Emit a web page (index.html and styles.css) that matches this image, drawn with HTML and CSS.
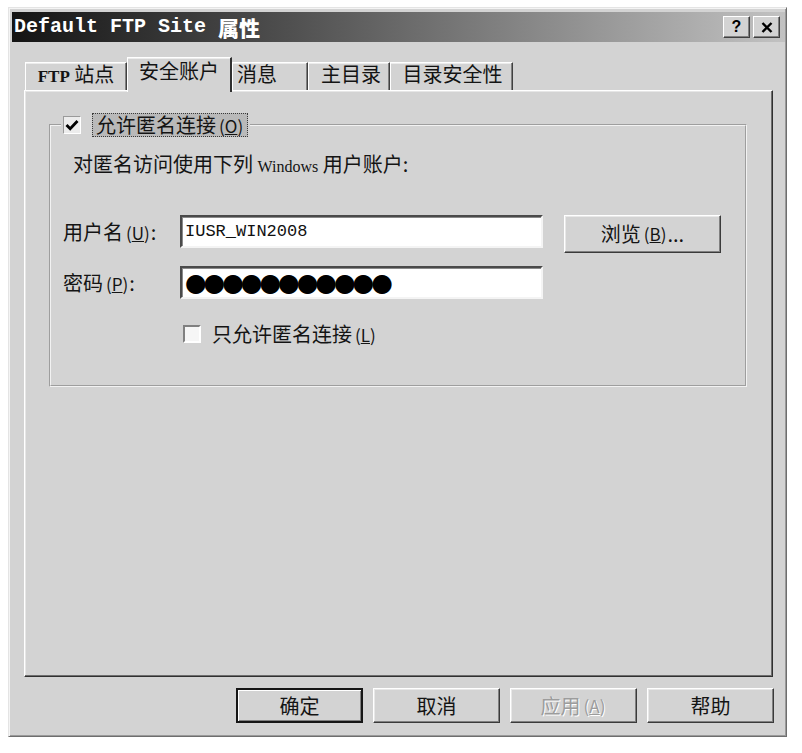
FILE: index.html
```html
<!DOCTYPE html>
<html lang="zh-CN">
<head>
<meta charset="utf-8">
<title>Default FTP Site 属性</title>
<link rel="stylesheet" href="styles.css">
</head>
<body>
<div class="dialog">
  <div class="titlebar">
    <div class="title"><span class="title-latin">Default FTP Site </span><span class="title-cjk">属性</span></div>
    <div class="title-btns">
      <div class="tbtn"><span class="q">?</span></div>
      <div class="tbtn">
        <svg class="xicon" width="12" height="11" viewBox="0 0 12 11"><path d="M1.5 1 L10.5 10 M10.5 1 L1.5 10" stroke="#000" stroke-width="2.4" fill="none"/></svg>
      </div>
    </div>
  </div>

  <div class="tabs">
    <div class="tab tab-ftp"><span class="latin-b">FTP</span>&nbsp;站点</div>
    <div class="tab tab-sel">安全账户</div>
    <div class="tab tab-msg">消息</div>
    <div class="tab tab-home">主目录</div>
    <div class="tab tab-dirsec">目录安全性</div>
  </div>

  <div class="panel">
    <fieldset class="group">
      <legend class="legend">
        <span class="chk">
          <svg width="14" height="13" viewBox="0 0 14 13"><path d="M1.5 6 L5.2 9.8 L12.5 2" stroke="#000" stroke-width="2.8" fill="none"/></svg>
        </span>
        <span class="legend-label">允许匿名连接<span class="mn">(<u>O</u>)</span></span>
      </legend>

      <div class="info">对匿名访问使用下列 <span class="serif">Windows</span> 用户账户:</div>

      <div class="row row-user">
        <div class="lbl">用户名<span class="mn">(<u>U</u>)</span>:</div>
        <div class="field"><span class="mono">IUSR_WIN2008</span></div>
        <div class="btn btn-browse">浏览<span class="mn">(<u>B</u>)</span>...</div>
      </div>

      <div class="row row-pass">
        <div class="lbl">密码<span class="mn">(<u>P</u>)</span>:</div>
        <div class="field"><span class="dots">●●●●●●●●●●●</span></div>
      </div>

      <div class="row row-only">
        <span class="chk chk-plain"></span>
        <span class="only-label">只允许匿名连接<span class="mn">(<u>L</u>)</span></span>
      </div>
    </fieldset>
  </div>

  <div class="footer">
    <div class="btn btn-foot btn-default">确定</div>
    <div class="btn btn-foot">取消</div>
    <div class="btn btn-foot btn-disabled">应用<span class="mn">(<u>A</u>)</span></div>
    <div class="btn btn-foot">帮助</div>
  </div>
</div>
</body>
</html>
```

FILE: styles.css
```css
* { box-sizing: border-box; }

body {
  margin: 0;
  background: #ffffff;
  font-family: "Noto Sans CJK SC", "Noto Sans", sans-serif;
  color: #141414;
  font-size: 20px;
}

.dialog {
  margin: 7px 0 0 8px;
  width: 779px;
  height: 730px;
  background: #d3d3d3;
  border: 1px solid;
  border-color: #e4e4e4 #6e6e6e #6e6e6e #e4e4e4;
  box-shadow: inset 1px 1px 0 #f4f4f4, inset -1px -1px 0 #9a9a9a;
  display: flex;
  flex-direction: column;
  padding: 1px;
}

/* title bar */
.titlebar {
  margin: 3px 0 0 2px;
  height: 30px;
  display: flex;
  align-items: center;
  justify-content: space-between;
  background: linear-gradient(to right, #141414 0%, #4e4e4e 35%, #c2c2c2 100%);
  padding: 0 5px 0 2px;
}

.title {
  display: flex;
  align-items: center;
  color: #ffffff;
  font-weight: bold;
  line-height: 30px;
}

.title-latin {
  font-family: "Liberation Mono", monospace;
  font-size: 20px;
  white-space: pre;
}

.title-cjk {
  font-family: "Noto Sans CJK SC", sans-serif;
  font-size: 21px;
  font-weight: 900;
}

.title-btns {
  display: flex;
  gap: 3px;
}

.tbtn {
  width: 27px;
  height: 22px;
  background: #d3d3d3;
  border: 1px solid;
  border-color: #ffffff #404040 #404040 #ffffff;
  box-shadow: inset -1px -1px 0 #808080;
  display: flex;
  align-items: center;
  justify-content: center;
}

.q {
  font-family: "Liberation Sans", sans-serif;
  font-weight: bold;
  font-size: 16px;
  line-height: 16px;
  color: #000;
}

/* tabs */
.tabs {
  margin: 15px 0 0 15px;
  height: 33px;
  display: flex;
  align-items: flex-end;
}

.tab {
  height: 28px;
  padding-top: 1px;
  line-height: 20px;
  text-align: center;
  white-space: nowrap;
  background: #d3d3d3;
  border-top: 1px solid #ffffff;
  border-left: 1px solid #ffffff;
  border-right: 1px solid #404040;
  box-shadow: inset -1px 0 0 #808080, inset 0 1px 0 #ececec;
}

.latin-b {
  font-family: "Liberation Serif", serif;
  font-weight: bold;
  font-size: 17px;
}

.tab-ftp { width: 102px; }
.tab-sel {
  width: 105px;
  height: 35px;
  margin-bottom: -2px;
  padding-top: 3px;
  position: relative;
  z-index: 1;
  border-right: 2px solid #303030;
  box-shadow: inset 0 1px 0 #ececec;
}
.tab-msg { width: 76px; padding-right: 26px; }
.tab-home { width: 82px; padding-left: 4px; }
.tab-dirsec { width: 123px; padding-left: 2px; }

/* panel */
.panel {
  margin-left: 14px;
  width: 749px;
  height: 587px;
  border: 1px solid;
  border-color: #ffffff #303030 #303030 #ffffff;
  box-shadow: inset -1px -1px 0 #6e6e6e, inset 1px 1px 0 #e6e6e6;
  display: flex;
  flex-direction: column;
}

.group {
  margin: 21px 0 0 24px;
  padding: 0;
  width: 698px;
  height: 275px;
  border: 2px groove #f2f2f2;
  min-width: 0;
}

.legend {
  margin-left: 10px;
  padding: 0 2px;
  height: 26px;
  display: flex;
  align-items: center;
  gap: 11px;
}

.chk {
  width: 18px;
  height: 18px;
  background: #ececec;
  border: 1px solid;
  border-color: #9a9a9a #ffffff #ffffff #9a9a9a;
  display: flex;
  align-items: center;
  justify-content: center;
}

.chk-plain {
  width: 18px;
  height: 18px;
  background: #f6f6f6;
  border-width: 2px;
  border-color: #808080 #ffffff #ffffff #808080;
}

.legend-label {
  display: block;
  height: 24px;
  line-height: 22px;
  padding: 0 3px;
  background: #b9b9b9;
  border: 1px dotted #3a3a3a;
  color: #141414;
}

.mn {
  font-size: 17px;
  padding: 0 1px 0 3px;
}

.info {
  margin: 14px 0 0 22px;
  line-height: 24px;
  white-space: nowrap;
}

.serif {
  font-family: "Liberation Serif", serif;
  font-size: 16px;
}

.row {
  display: flex;
  align-items: flex-start;
  padding-left: 12px;
}

.row-user { margin-top: 36px; }
.row-pass { margin-top: 13px; }

.lbl {
  width: 117px;
  line-height: 33px;
  white-space: nowrap;
}

.field {
  width: 363px;
  height: 33px;
  background: #ffffff;
  border: 2px solid;
  border-color: #4a4a4a #f4f4f4 #f4f4f4 #4a4a4a;
  box-shadow: inset 1px 1px 0 #8a8a8a;
  display: flex;
  align-items: center;
  padding-left: 3px;
  overflow: hidden;
}

.mono {
  font-family: "Liberation Mono", monospace;
  font-size: 17px;
  color: #111;
}

.dots {
  font-family: "DejaVu Sans", sans-serif;
  font-size: 25px;
  letter-spacing: -3.2px;
  line-height: 28px;
  color: #000;
}

.btn {
  background: #d3d3d3;
  border: 1px solid;
  border-color: #ffffff #3a3a3a #3a3a3a #ffffff;
  box-shadow: inset -1px -1px 0 #808080, inset 1px 1px 0 #e8e8e8;
  display: flex;
  align-items: center;
  justify-content: center;
  white-space: nowrap;
}

.btn-browse {
  margin-left: 21px;
  width: 157px;
  height: 38px;
  padding-bottom: 2px;
}

.row-only {
  margin-top: 22px;
  height: 24px;
  align-items: center;
  padding-left: 132px;
  gap: 11px;
}

.only-label {
  line-height: 24px;
}

/* footer */
.footer {
  margin-top: 11px;
  display: flex;
  justify-content: flex-end;
  gap: 10px;
  padding-right: 11px;
}

.btn-foot {
  width: 127px;
  height: 35px;
}

.btn-default {
  border: 2px solid #161616;
  box-shadow: inset 1px 1px 0 #ffffff, inset -1px -1px 0 #808080;
}

.btn-disabled {
  color: #9c9c9c;
  text-shadow: 1px 1px 0 #ffffff;
}
```
